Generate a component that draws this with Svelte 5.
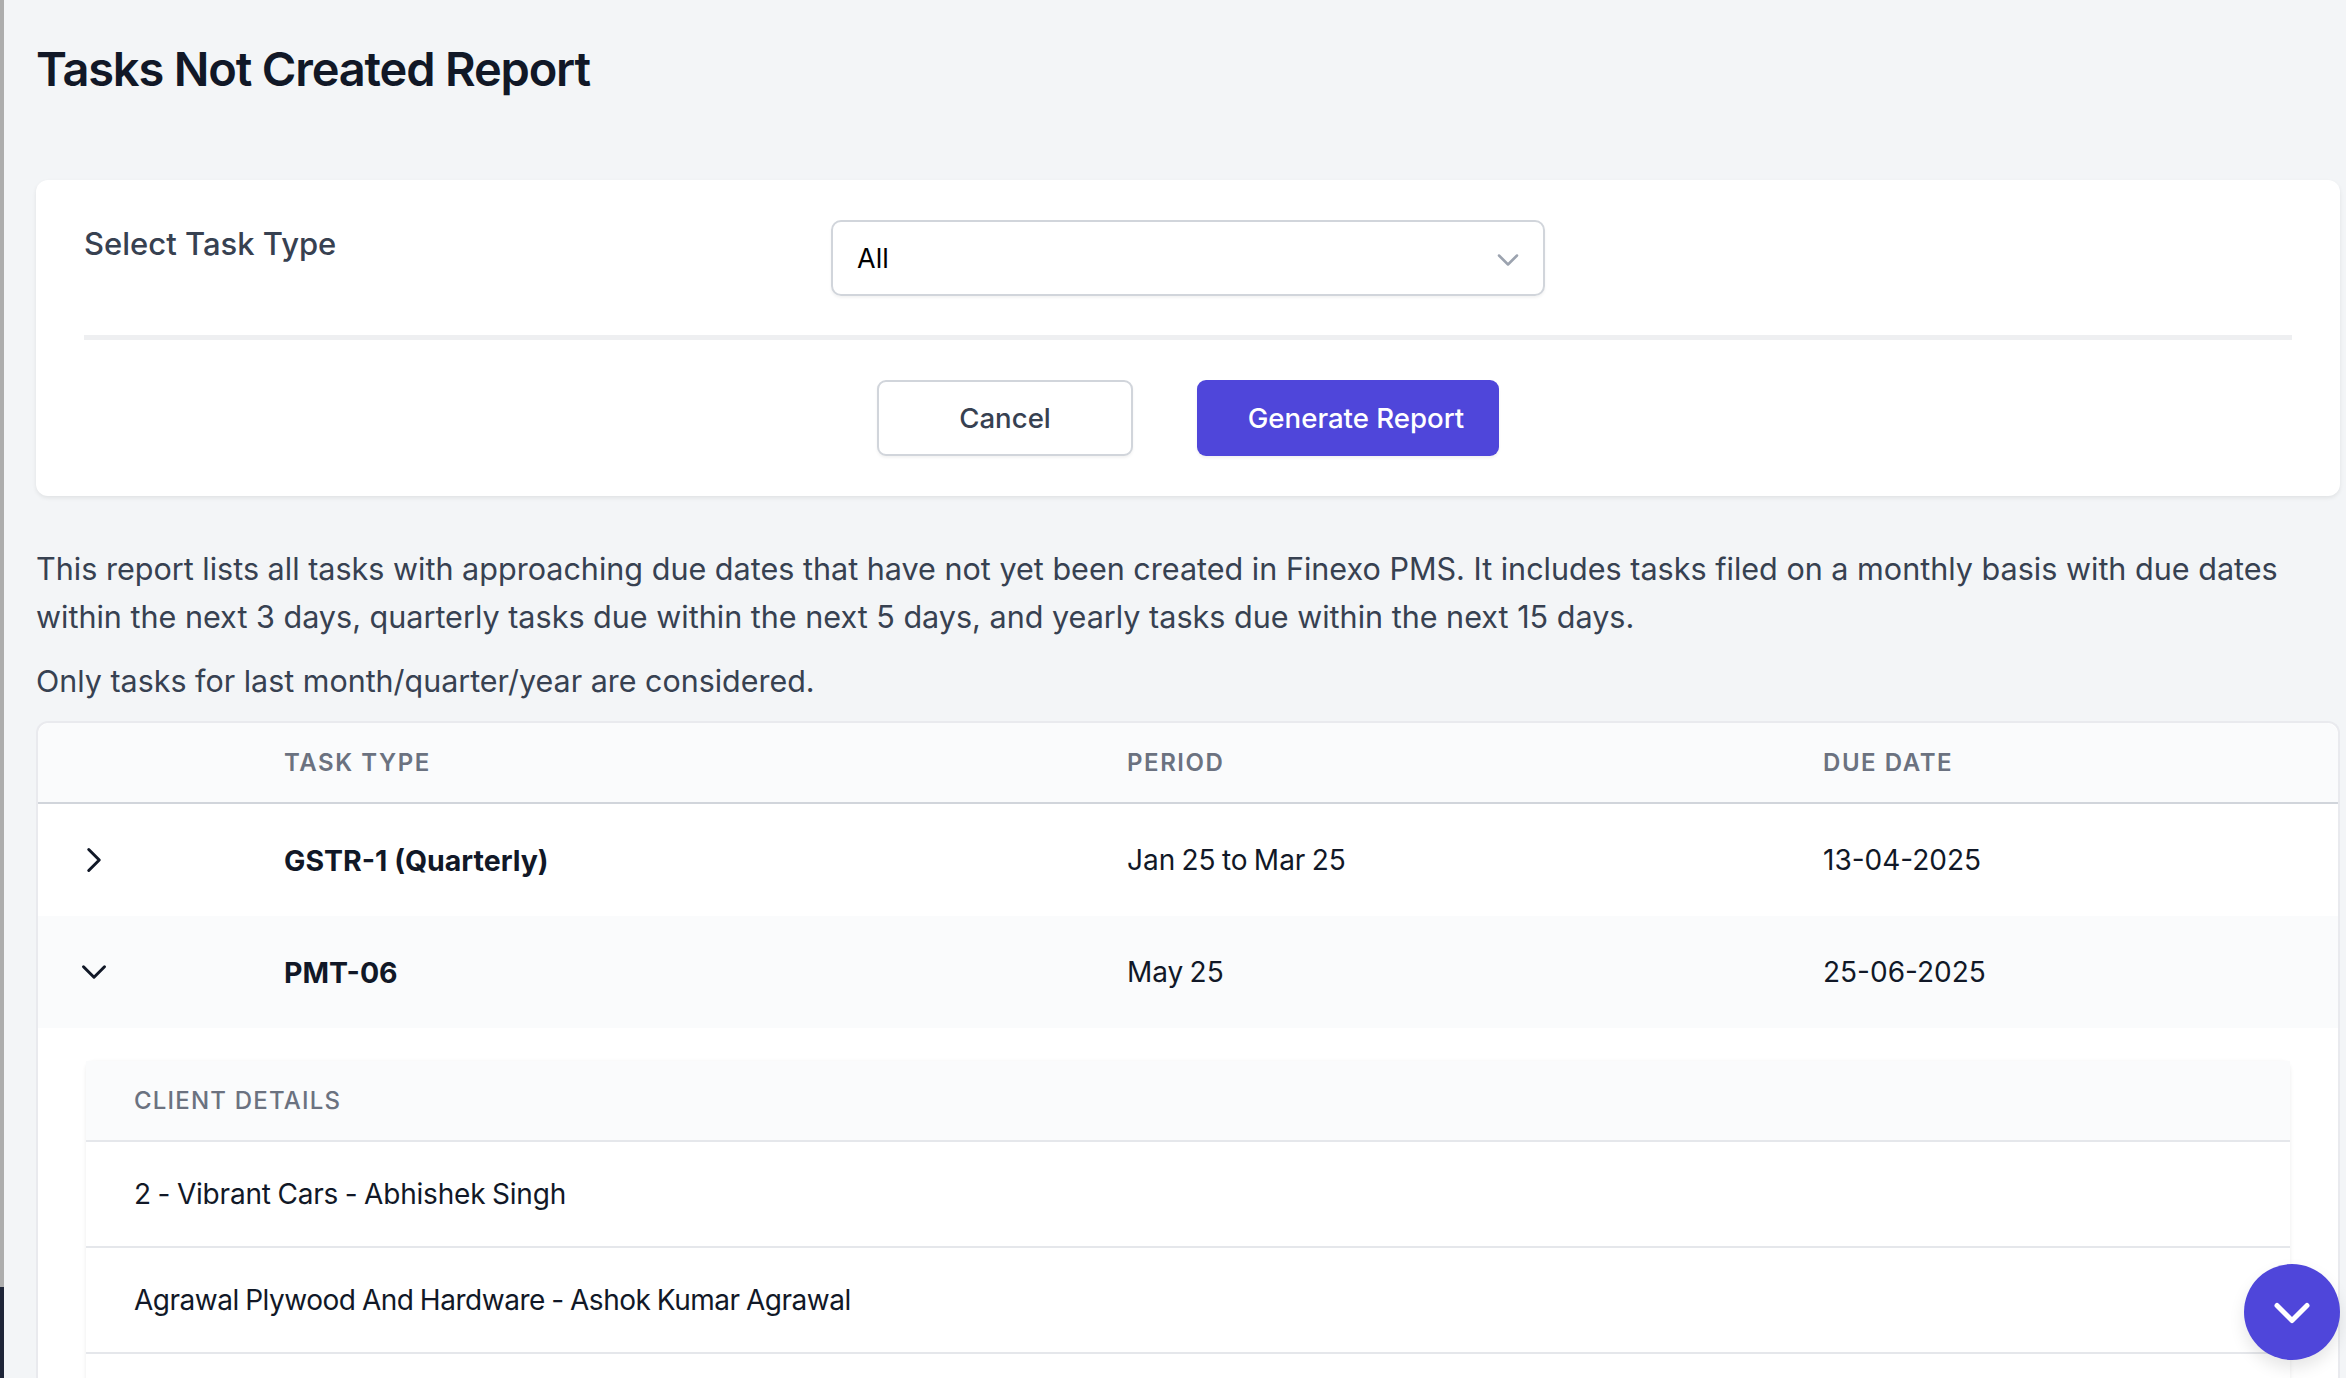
<script lang="ts">
	const rows = [
		{ type: 'GSTR-1 (Quarterly)', period: 'Jan 25 to Mar 25', due: '13-04-2025', open: false },
		{ type: 'PMT-06', period: 'May 25', due: '25-06-2025', open: true }
	];

	const clients = [
		'2 - Vibrant Cars - Abhishek Singh',
		'Agrawal Plywood And Hardware - Ashok Kumar Agrawal',
		''
	];
</script>

<div class="shell">
	<div class="edge"></div>
	<main class="page">
		<h1>Tasks Not Created Report</h1>

		<section class="card">
			<div class="field">
				<span class="field-label">Select Task Type</span>
				<div class="select">
					<span>All</span>
					<svg width="36" height="36" viewBox="0 0 20 20" fill="none" stroke="#9ca3af" stroke-width="1.4" stroke-linecap="round" stroke-linejoin="round">
						<path d="M5 7.5l5 5 5-5" />
					</svg>
				</div>
			</div>
			<div class="actions">
				<button class="btn cancel">Cancel</button>
				<button class="btn primary">Generate Report</button>
			</div>
		</section>

		<p class="intro">This report lists all tasks with approaching due dates that have not yet been created in Finexo PMS. It includes tasks filed on a monthly basis with due dates within the next 3 days, quarterly tasks due within the next 5 days, and yearly tasks due within the next 15 days.</p>
		<p class="note">Only tasks for last month/quarter/year are considered.</p>

		<div class="table-card">
			<div class="thead grid-row">
				<span></span>
				<span>Task Type</span>
				<span>Period</span>
				<span>Due Date</span>
			</div>
			{#each rows as row}
				<div class="grid-row task-row" class:open={row.open}>
					<span class="toggle">
						<svg width="36" height="36" viewBox="0 0 24 24" fill="none" stroke="#111827" stroke-width="2" stroke-linecap="round" stroke-linejoin="round">
							{#if row.open}
								<path d="M5 8.500l7 7 7-7" />
							{:else}
								<path d="M8.500 5l7 7-7 7" />
							{/if}
						</svg>
					</span>
					<span class="task-name">{row.type}</span>
					<span class="plain">{row.period}</span>
					<span>{row.due}</span>
				</div>
			{/each}

			<div class="details">
				<div class="clients">
					<div class="clients-head">Client Details</div>
					{#each clients as client}
						<div class="client-row">{client}</div>
					{/each}
				</div>
			</div>
		</div>
	</main>

	<button class="fab" aria-label="Scroll down">
		<svg width="48" height="48" viewBox="0 0 24 24" fill="none" stroke="#fff" stroke-width="2.5" stroke-linecap="round" stroke-linejoin="round">
			<path d="M4.500 8.750l7.500 7.500 7.500-7.500" />
		</svg>
	</button>
</div>

<style>
	:global(body) {
		margin: 0;
		background: #f3f5f7;
		font-family: Inter, "Liberation Sans", sans-serif;
	}

	.shell {
		display: flex;
		height: 1378px;
		overflow: hidden;
		position: relative;
	}

	.edge {
		flex: 0 0 4px;
		background: linear-gradient(#adadad 1287px, #1e2538 1287px);
	}

	.page {
		flex: 1;
		min-width: 0;
		padding: 0 6px 0 32px;
	}

	h1 {
		margin: 0;
		padding-top: 39px;
		height: 180px;
		box-sizing: border-box;
		font-size: 47px;
		line-height: 60px;
		font-weight: 600;
		letter-spacing: -0.025em;
		color: #111827;
	}

	.card {
		background: #fff;
		border-radius: 12px;
		box-shadow: 0 2px 4px rgba(0, 0, 0, 0.08);
		padding: 40px 48px;
		height: 316px;
		box-sizing: border-box;
	}

	.field {
		display: flex;
		align-items: flex-start;
		height: 115px;
		border-bottom: 5px solid #eeeff1;
	}

	.field-label {
		flex: 0 0 747px;
		font-size: 31px;
		line-height: 48px;
		font-weight: 500;
		color: #374151;
	}

	.select {
		width: 714px;
		height: 76px;
		box-sizing: border-box;
		border: 2px solid #d1d5db;
		border-radius: 10px;
		box-shadow: 0 2px 3px rgba(0, 0, 0, 0.05);
		display: flex;
		align-items: center;
		justify-content: space-between;
		padding: 0 17px 0 24px;
		font-size: 27px;
		color: #000;
	}

	.select svg {
		margin-top: 4px;
	}

	.actions {
		display: flex;
		justify-content: center;
		gap: 64px;
		padding-top: 40px;
	}

	.btn {
		height: 76px;
		box-sizing: border-box;
		border-radius: 9px;
		font-family: inherit;
		font-size: 27.600px;
		font-weight: 500;
		padding: 0;
	}

	.cancel {
		width: 256px;
		background: #fff;
		border: 2px solid #d1d5db;
		color: #374151;
		box-shadow: 0 2px 3px rgba(0, 0, 0, 0.05);
	}

	.primary {
		width: 302px;
		padding-left: 16px;
		background: #4f46da;
		border: 0;
		color: #fff;
		box-shadow: 0 2px 3px rgba(0, 0, 0, 0.06);
	}

	.intro,
	.note {
		margin: 0;
		color: #374151;
		font-size: 30.550px;
		line-height: 48px;
	}

	.intro {
		padding-top: 49px;
	}

	.note {
		padding-top: 16px;
		font-size: 30.450px;
	}

	.table-card {
		margin-top: 16px;
		background: #fff;
		border: 2px solid #e9eaee;
		border-bottom: 0;
		border-radius: 12px 12px 0 0;
		height: 700px;
		box-sizing: border-box;
	}

	.grid-row {
		display: grid;
		grid-template-columns: 246px 843px 696px 1fr;
		align-items: center;
		font-size: 28px;
		color: #111827;
	}

	.thead {
		height: 81px;
		box-sizing: border-box;
		background: #fafbfc;
		border-bottom: 2px solid #d1d5db;
		border-radius: 12px 12px 0 0;
		font-size: 24px;
		font-weight: 600;
		letter-spacing: 0.065em;
		text-transform: uppercase;
		color: #6b7280;
	}

	.task-row {
		height: 112px;
	}

	.task-row.open {
		background: #fafbfc;
	}

	.toggle {
		display: flex;
		justify-content: center;
		width: 112px;
	}

	.task-name {
		font-size: 28.500px;
		font-weight: 700;
	}

	.plain {
		word-spacing: -1.600px;
	}

	.details {
		padding: 33px 48px 0;
	}

	.clients {
		border-radius: 8px;
		box-shadow: 0 1px 4px rgba(0, 0, 0, 0.08);
	}

	.clients-head {
		height: 81px;
		line-height: 80px;
		box-sizing: border-box;
		background: #fafbfc;
		border-bottom: 2px solid #e5e7eb;
		padding-left: 48px;
		font-size: 24px;
		font-weight: 500;
		letter-spacing: 0.05em;
		text-transform: uppercase;
		color: #6b7280;
	}

	.client-row {
		height: 106px;
		line-height: 104px;
		box-sizing: border-box;
		border-bottom: 2px solid #e5e7eb;
		padding-left: 48px;
		font-size: 28px;
		letter-spacing: -0.2px;
		word-spacing: -1px;
		color: #111827;
	}

	.client-row:nth-child(3) {
		letter-spacing: -0.480px;
	}

	.fab {
		position: absolute;
		right: 6px;
		top: 1264px;
		width: 96px;
		height: 96px;
		padding: 0;
		border: 0;
		border-radius: 50%;
		background: #4f46da;
		box-shadow: 0 8px 16px rgba(0, 0, 0, 0.1);
		display: flex;
		align-items: center;
		justify-content: center;
	}
</style>
